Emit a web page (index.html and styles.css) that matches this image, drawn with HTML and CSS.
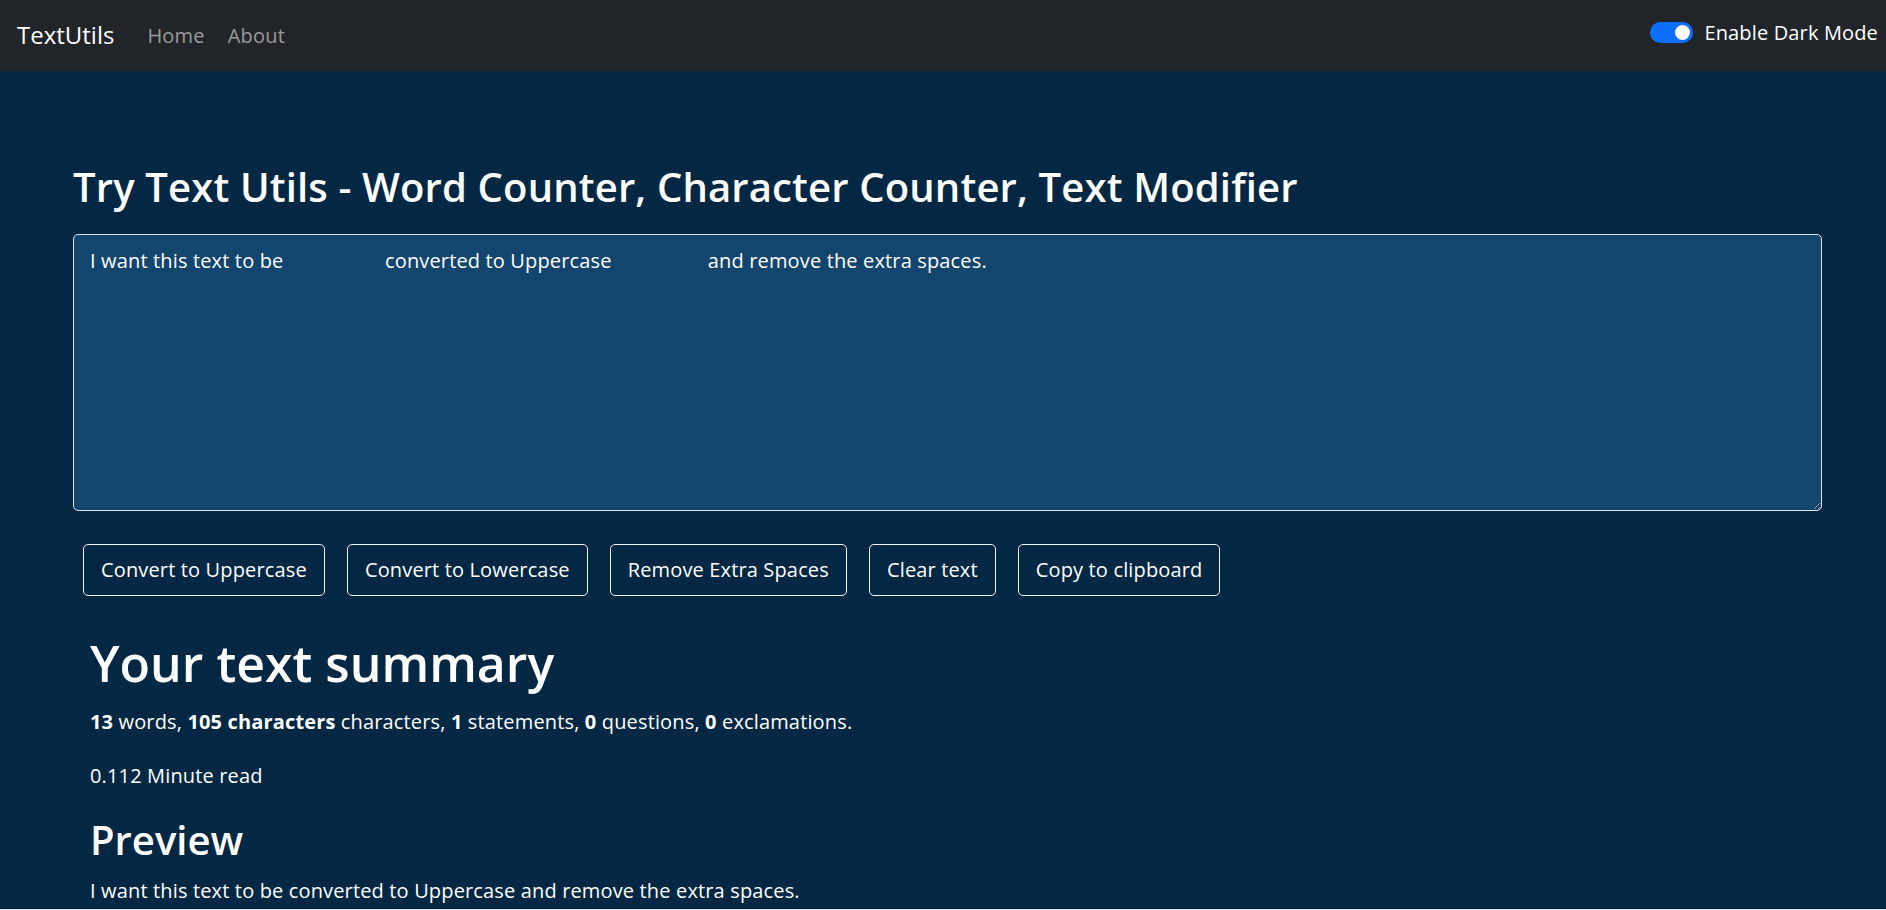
FILE: index.html
```html
<!DOCTYPE html>
<html lang="en">
<head>
<meta charset="utf-8">
<title>TextUtils</title>
<link rel="stylesheet" href="styles.css">
</head>
<body>
<nav class="navbar">
  <a class="brand" href="#">TextUtils</a>
  <ul class="nav-links">
    <li><a href="#">Home</a></li>
    <li><a href="#">About</a></li>
  </ul>
  <div class="switch">
    <span class="switch-track"><span class="switch-knob"></span></span>
    <span class="switch-label">Enable Dark Mode</span>
  </div>
</nav>
<main class="page">
  <div class="form-block">
    <h1 class="title">Try Text Utils - Word Counter, Character Counter, Text Modifier</h1>
    <textarea class="text-input" spellcheck="false">I want this text to be                   converted to Uppercase                  and remove the extra spaces.</textarea>
    <div class="actions">
      <button class="btn">Convert to Uppercase</button>
      <button class="btn">Convert to Lowercase</button>
      <button class="btn">Remove Extra Spaces</button>
      <button class="btn">Clear text</button>
      <button class="btn">Copy to clipboard</button>
    </div>
  </div>
  <section class="summary">
    <h2 class="summary-title">Your text summary</h2>
    <p class="stats"><b>13</b> words, <b>105 characters</b> characters, <b>1</b> statements, <b>0</b> questions, <b>0</b> exclamations.</p>
    <p class="read">0.112 Minute read</p>
    <h3 class="preview-title">Preview</h3>
    <p class="preview">I want this text to be converted to Uppercase and remove the extra spaces.</p>
  </section>
</main>
</body>
</html>
```

FILE: styles.css
```css
* { box-sizing: border-box; }

html, body {
  margin: 0;
  padding: 0;
}

body {
  background: #d8dee5;
  font-family: "Open Sans", Lato, sans-serif;
  color: #ffffff;
  height: 910px;
  overflow: hidden;
}

.navbar {
  height: 71px;
  background: #212529;
  display: flex;
  align-items: center;
  padding: 0 8px 0 17px;
}

.brand {
  color: #ffffff;
  text-decoration: none;
  font-size: 24px;
  line-height: 30px;
  margin-right: 33px;
  padding-bottom: 2px;
}

.nav-links {
  list-style: none;
  margin: 0;
  padding: 0;
  display: flex;
  gap: 23px;
  flex: 1;
}

.nav-links a {
  color: rgba(255, 255, 255, 0.55);
  text-decoration: none;
  font-size: 20px;
  line-height: 30px;
  letter-spacing: 0.2px;
}

.switch {
  display: flex;
  align-items: center;
  gap: 11px;
  padding-bottom: 6px;
}

.switch-track {
  width: 43px;
  height: 21px;
  border-radius: 11px;
  background: #0d6efd;
  display: flex;
  align-items: center;
  justify-content: flex-end;
  padding-right: 3px;
}

.switch-knob {
  width: 15px;
  height: 15px;
  border-radius: 50%;
  background: #ffffff;
}

.switch-label {
  font-size: 20px;
  line-height: 30px;
  letter-spacing: 0.15px;
  color: #ffffff;
}

.page {
  height: 838px;
  background: #042743;
  padding: 91px 64px 0 73px;
}

.title {
  margin: 0 0 22px;
  font-size: 40px;
  line-height: 50px;
  font-weight: 600;
  letter-spacing: 0.15px;
}

.text-input {
  display: block;
  width: 100%;
  height: 277px;
  background: #13466e;
  color: #ffffff;
  border: 1px solid #dee2e6;
  border-radius: 5px;
  padding: 11px 16px 8px;
  font-family: inherit;
  font-size: 20px;
  line-height: 30px;
  letter-spacing: 0.15px;
  resize: vertical;
  outline: none;
  overflow: hidden;
}

.actions {
  display: flex;
  gap: 22px;
  margin: 33px 0 0 10px;
}

.btn {
  background: transparent;
  color: #ffffff;
  border: 1px solid #f1f3f5;
  border-radius: 5px;
  font-family: inherit;
  font-size: 20px;
  line-height: 30px;
  letter-spacing: 0.15px;
  padding: 10px 17px 10px;
}

.summary {
  padding-left: 17px;
}

.summary-title {
  margin: 37px 0 0;
  font-size: 50px;
  line-height: 61px;
  font-weight: 600;
}

.stats, .read, .preview {
  font-size: 20px;
  line-height: 30px;
  letter-spacing: 0.15px;
}

.stats { margin: 13px 0 0; }
.stats b { font-weight: 700; }

.read { margin: 24px 0 0; }

.preview-title {
  margin: 24px 0 0;
  font-size: 40px;
  line-height: 49px;
  font-weight: 600;
}

.preview { margin: 12px 0 0; }
```
